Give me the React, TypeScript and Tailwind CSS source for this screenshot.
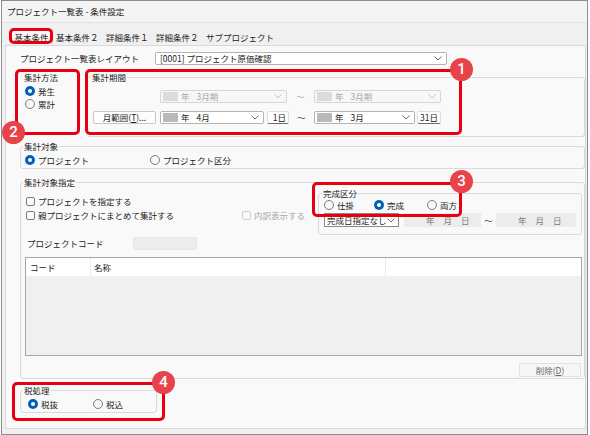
import React from 'react';

const Chevron = ({ light }: { light?: boolean }) => (
    <svg width="8" height="5" viewBox="0 0 8 5" className="shrink-0">
        <polyline points="0.5,0.5 4,4 7.5,0.5" fill="none" stroke={light ? '#c4c4c4' : '#6a6a6a'} strokeWidth="1" />
    </svg>
);

const Radio = ({ checked, label, className }: { checked?: boolean; label: string; className?: string }) => (
    <div className={`flex items-center h-[12px] ${className ?? ''}`}>
        {checked ? (
            <span className="w-[10px] h-[10px] rounded-full bg-[#005fb8] flex items-center justify-center shrink-0">
                <span className="w-[4px] h-[4px] rounded-full bg-white" />
            </span>
        ) : (
            <span className="w-[10px] h-[10px] rounded-full border border-[#7c7c7c] bg-[#f7f7f7] shrink-0" />
        )}
        <span className="ml-[3px] leading-[12px]">{label}</span>
    </div>
);

const Check = ({ label, disabled, className }: { label: string; disabled?: boolean; className?: string }) => (
    <div className={`flex items-center h-[12px] ${disabled ? 'text-[#a8a8a8]' : ''} ${className ?? ''}`}>
        <span
            className={`w-[9px] h-[9px] rounded-[2px] border shrink-0 ${
                disabled ? 'border-[#cfcfcf] bg-[#f9f9f9]' : 'border-[#7c7c7c] bg-[#fbfbfb]'
            }`}
        />
        <span className="ml-[3px] leading-[12px]">{label}</span>
    </div>
);

const Group = ({
    label,
    className,
    legendClass,
    children,
}: {
    label: string;
    className?: string;
    legendClass?: string;
    children: React.ReactNode;
}) => (
    <fieldset className={`border border-[#dadada] rounded-[3px] min-w-0 ${className ?? ''}`}>
        <legend className={`px-[1px] ${legendClass ?? 'ml-[2px] leading-[12px]'}`}>{label}</legend>
        {children}
    </fieldset>
);

// 年月のコンボ (年の部分は灰色で伏せてある)
const YearMonth = ({ width, month, disabled }: { width: string; month: string; disabled?: boolean }) => (
    <div
        className={`${width} h-[13px] flex items-center rounded-[2px] border pl-[2px] pr-[4px] ${
            disabled ? 'bg-[#f7f7f7] border-[#d6d6d6] text-[#a6a6a6]' : 'bg-white border-[#b4b4b4]'
        }`}
    >
        <span className={`w-[15px] h-[9px] shrink-0 ${disabled ? 'bg-[#dcdcdc]' : 'bg-[#b9b9b9]'}`} />
        <span className="ml-[3px]">年</span>
        <span className="ml-[7px] flex-1">{month}</span>
        <Chevron light={disabled} />
    </div>
);

const DayBox = ({ width, text }: { width: string; text: string }) => (
    <div
        className={`${width} h-[13px] flex items-center justify-end pr-[2px] bg-white border border-[#dedede] border-b-[#6e6e6e] rounded-[2px]`}
    >
        {text}
    </div>
);

const DateBox = ({ width }: { width: string }) => (
    <div className={`${width} h-[14px] bg-[#ececec] flex items-center pl-[22px] gap-[9px] text-[#7a7a7a]`}>
        <span>年</span>
        <span>月</span>
        <span>日</span>
    </div>
);

const Tilde = ({ light, width }: { light?: boolean; width: string }) => (
    <span className={`${width} text-center ${light ? 'text-[#b0b0b0]' : 'text-[#444]'}`}>～</span>
);

const Badge = ({ n, pos }: { n: number; pos: string }) => (
    <div
        className={`absolute ${pos} w-[23px] h-[23px] rounded-full bg-[#e8434a] text-white flex items-center justify-center font-['Roboto',sans-serif] text-[15px] font-medium`}
    >
        {n}
    </div>
);

const Mark = ({ pos }: { pos: string }) => (
    <div className={`absolute ${pos} border-[3px] border-[#e60012] rounded-[5px]`} />
);

export default function App() {
    return (
        <div className="relative w-[590px] h-[435px] bg-white overflow-hidden font-['Noto_Sans_CJK_JP','Noto_Sans',sans-serif] text-[8.5px] text-[#1b1b1b]">
            <div className="ml-[1px] w-[587px] h-[435px] border border-[#8c8c8c] bg-[#f0f0f0] flex flex-col">
                {/* タイトル */}
                <div className="h-[22px] shrink-0 bg-[#f4f4f4] border-b border-[#e2e2e2] flex items-center pl-[5px]">
                    プロジェクト一覧表 - 条件設定
                </div>

                {/* タブ */}
                <div className="h-[22px] shrink-0 flex items-end pl-[8px]">
                    <div className="w-[43px] h-[16px] bg-[#f9f9f9] border border-b-0 border-[#d9d9d9] flex items-center justify-center">
                        基本条件
                    </div>
                    <div className="w-[50px] h-[16px] flex items-center pl-[3px]">基本条件２</div>
                    <div className="w-[50px] h-[16px] flex items-center pl-[3px]">詳細条件１</div>
                    <div className="w-[50px] h-[16px] flex items-center pl-[3px]">詳細条件２</div>
                    <div className="h-[16px] flex items-center pl-[3px]">サブプロジェクト</div>
                </div>

                {/* タブページ */}
                <div className="ml-[3px] mr-[1px] h-[384px] shrink-0 bg-[#f9f9f9] border border-[#d9d9d9] pl-[14px] flex flex-col">
                    <div className="mt-[6px] h-[13px] flex items-center">
                        <span className="w-[135px]">プロジェクト一覧表レイアウト</span>
                        <div className="w-[292px] h-[13px] flex items-center bg-white border border-[#b4b4b4] rounded-[2px] pl-[4px] pr-[4px]">
                            <span className="flex-1">[0001] プロジェクト原価確認</span>
                            <Chevron />
                        </div>
                    </div>

                    <div className="mt-[6px] flex">
                        <div className="w-[66px] shrink-0 pl-[4px]">
                            <div className="h-[12px] leading-[12px]">集計方法</div>
                            <Radio checked label="発生" className="mt-[2px] ml-[1px]" />
                            <Radio label="累計" className="mt-[1px] ml-[1px]" />
                        </div>

                        <Group label="集計期間" className="flex-1 pb-[12px]" legendClass="ml-[4px] leading-[12px]">
                            <div className="mt-[7px] h-[13px] flex items-center pl-[73px]">
                                <YearMonth width="w-[127px]" month="3月期" disabled />
                                <Tilde width="w-[27px]" light />
                                <YearMonth width="w-[127px]" month="3月期" disabled />
                            </div>
                            <div className="mt-[8px] h-[13px] flex items-center pl-[6px]">
                                <div className="w-[63px] h-[13px] flex items-center justify-center bg-[#fdfdfd] border border-[#c8c8c8] rounded-[2px]">
                                    月範囲(<span className="underline">T</span>)...
                                </div>
                                <div className="ml-[4px]">
                                    <YearMonth width="w-[104px]" month="4月" />
                                </div>
                                <div className="ml-[3px]">
                                    <DayBox width="w-[22px]" text="1日" />
                                </div>
                                <Tilde width="w-[25px]" />
                                <YearMonth width="w-[101px]" month="3月" />
                                <div className="ml-[2px]">
                                    <DayBox width="w-[24px]" text="31日" />
                                </div>
                            </div>
                        </Group>
                    </div>

                    <Group label="集計対象" className="mt-[3px] pb-[2px]">
                        <div className="mt-[2px] flex pl-[4px]">
                            <Radio checked label="プロジェクト" className="w-[125px]" />
                            <Radio label="プロジェクト区分" />
                        </div>
                    </Group>

                    <Group label="集計対象指定" className="mt-[7px] pb-[1px]">
                        <div className="flex">
                            <div className="flex-1 pl-[5px]">
                                <Check label="プロジェクトを指定する" className="mt-[7px]" />
                                <div className="mt-[2px] flex">
                                    <Check label="親プロジェクトにまとめて集計する" className="w-[216px]" />
                                    <Check label="内訳表示する" disabled />
                                </div>
                            </div>
                            <Group
                                label="完成区分"
                                className="w-[264px] mr-[2px] shrink-0 pb-[7px]"
                                legendClass="ml-[3px] leading-[10px]"
                            >
                                <div className="mt-[1px] flex pl-[5px]">
                                    <Radio label="仕掛" className="w-[50px]" />
                                    <Radio checked label="完成" className="w-[53px]" />
                                    <Radio label="両方" />
                                </div>
                                <div className="mt-[2px] h-[14px] flex items-center pl-[5px]">
                                    <div className="w-[75px] h-[14px] flex items-center bg-white border border-[#8a8a8a] pl-[2px] pr-[3px]">
                                        <span className="flex-1">完成日指定なし</span>
                                        <Chevron />
                                    </div>
                                    <div className="ml-[5px]">
                                        <DateBox width="w-[77px]" />
                                    </div>
                                    <Tilde width="w-[15px]" />
                                    <DateBox width="w-[80px]" />
                                </div>
                            </Group>
                        </div>

                        <div className="mt-[2px] h-[13px] flex items-center pl-[6px]">
                            <span className="w-[106px]">プロジェクトコード</span>
                            <div className="w-[64px] h-[13px] bg-[#ededed] border border-[#e6e6e6] rounded-[2px]" />
                        </div>

                        <div className="mt-[7px] ml-[4px] mr-[2px] h-[99px] border border-[#a6a6a6] flex flex-col">
                            <div className="h-[18px] bg-white flex">
                                <div className="w-[65px] border-r border-[#ececec] pl-[4px] flex items-center">コード</div>
                                <div className="w-[295px] border-r border-[#ececec] pl-[3px] flex items-center">名称</div>
                                <div className="flex-1" />
                            </div>
                            <div className="flex-1 bg-[#f0f0f0]" />
                        </div>

                        <div className="mt-[7px] mr-[3px] flex justify-end">
                            <div className="w-[62px] h-[14px] flex items-center justify-center bg-[#f6f6f6] border border-[#e2e2e2] text-[#6a6a6a]">
                                削除(<span className="underline">D</span>)
                            </div>
                        </div>
                    </Group>

                    <Group label="税処理" className="mt-[5px] w-[137px] pb-[2px]">
                        <div className="mt-[2px] flex pl-[7px]">
                            <Radio checked label="税抜" className="w-[65px]" />
                            <Radio label="税込" />
                        </div>
                    </Group>
                </div>
            </div>

            {/* 注釈 */}
            <Mark pos="left-[9px] top-[28px] w-[44px] h-[16px]" />
            <Mark pos="left-[15px] top-[69px] w-[65px] h-[66px]" />
            <Mark pos="left-[85px] top-[69px] w-[377px] h-[66px]" />
            <Mark pos="left-[312px] top-[182px] w-[150px] h-[35px]" />
            <Mark pos="left-[12px] top-[382px] w-[153px] h-[39px]" />
            <Badge n={1} pos="left-[450px] top-[58px]" />
            <Badge n={2} pos="left-[2px] top-[121px]" />
            <Badge n={3} pos="left-[450px] top-[170px]" />
            <Badge n={4} pos="left-[152px] top-[371px]" />
        </div>
    );
}
